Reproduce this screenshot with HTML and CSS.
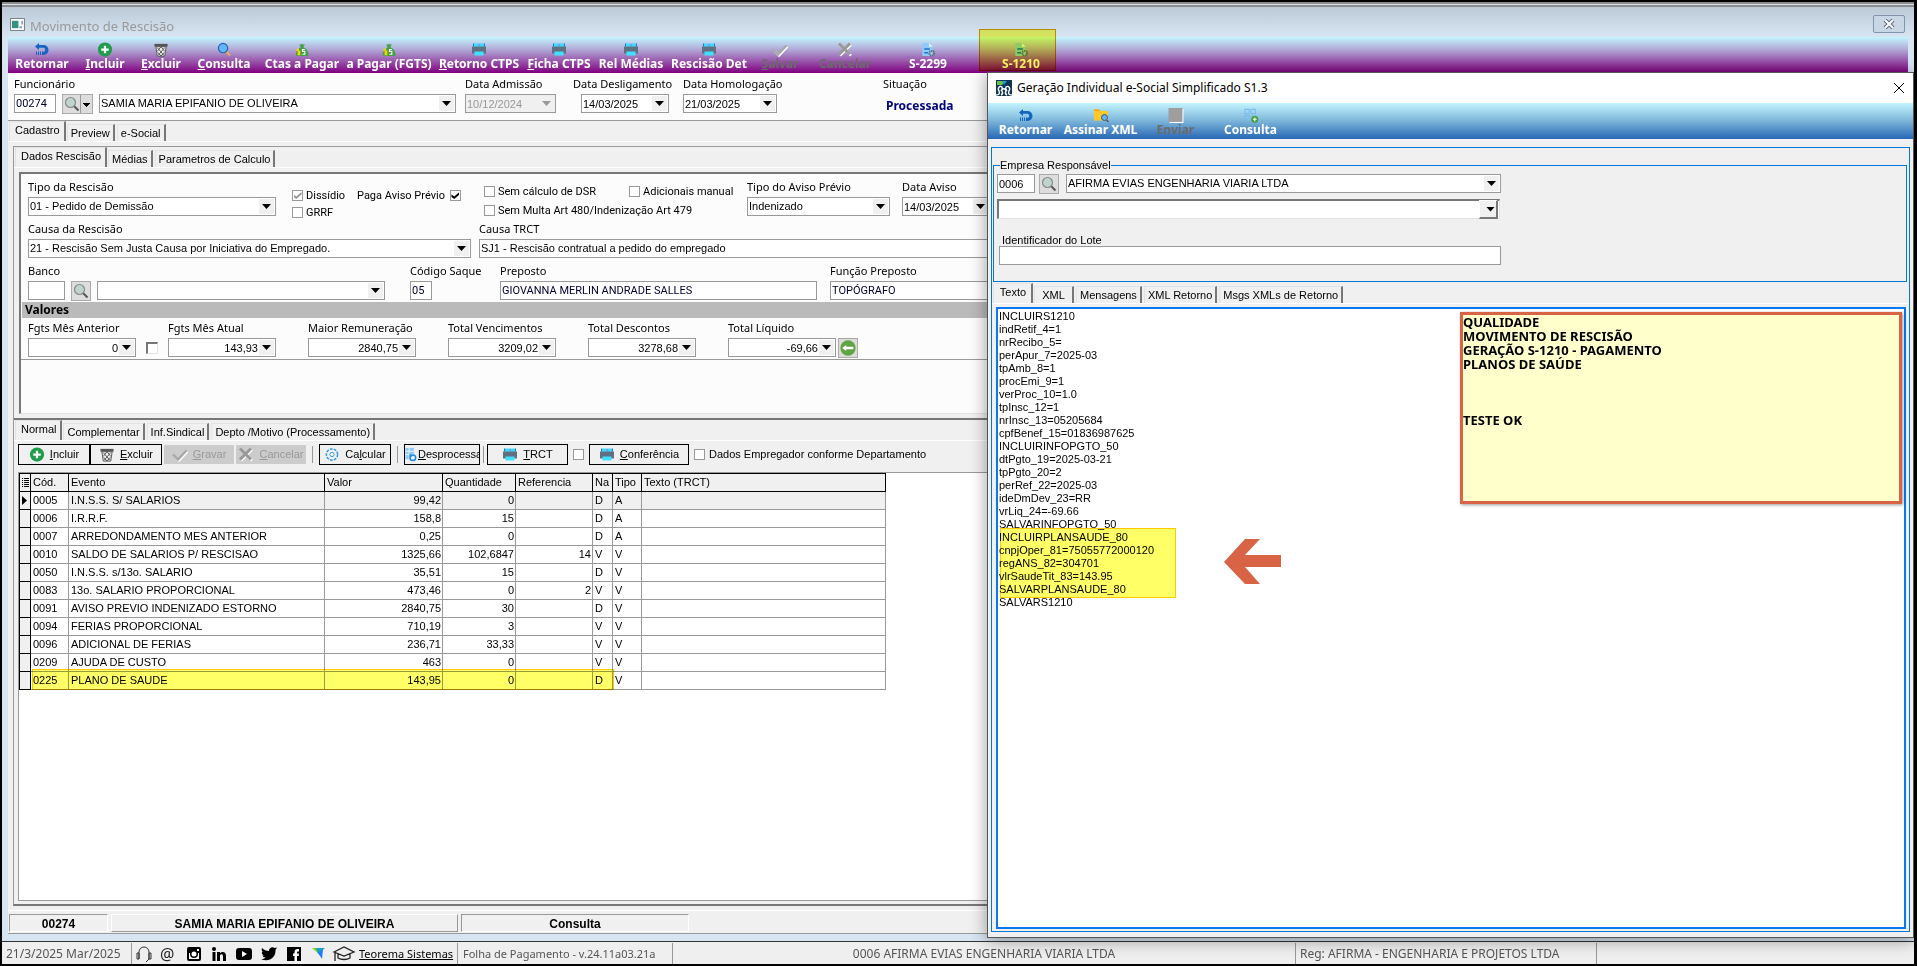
FILE: index.html
```html
<!DOCTYPE html>
<html lang="pt-BR">

<head>
  <meta charset="UTF-8">
  <title>Movimento de Rescisão</title>
  <link rel="stylesheet" href="styles.css">
</head>

<body>

  <svg class="sprite" aria-hidden="true">
    <symbol id="i-back" viewBox="0 0 16 14">
      <path d="M1 4 5 0.500v2h4.500a5 5 0 0 1 0 10H9v-3h.5a2.200 2.200 0 0 0 0-4.300H5v2.300z" fill="#1565c0"/>
      <path d="M2.500 9v3.500M4.500 9v3.500M6.500 9v3.500M8.500 9v3.500" stroke="#1565c0"/>
    </symbol>
    <symbol id="i-plus" viewBox="0 0 16 16">
      <circle cx="8" cy="8" r="7.600" fill="#1f9d4b"/>
      <path d="M8 4v8M4 8h8" stroke="#fff" stroke-width="2.400"/>
    </symbol>
    <symbol id="i-trash" viewBox="0 0 16 16">
      <path d="M1 2h14v3H1z" fill="#555"/>
      <path d="M2.500 5h11L12 15H4z" fill="#eee" stroke="#555"/>
      <path d="M4 6l7 8M12 6l-7 8M8 5l4 5M8 5l-4 5M8 15l3.500-4M8 15l-3.500-4" stroke="#555" fill="none"/>
    </symbol>
    <symbol id="i-find" viewBox="0 0 16 16">
      <path d="M10.500 10.500l4 4" stroke="#e8b04a" stroke-width="2.200"/>
      <circle cx="7" cy="6.500" r="5" fill="#64b5f6" stroke="#1e63b0" stroke-width="1.200"/>
    </symbol>
    <symbol id="i-lens" viewBox="0 0 16 16">
      <path d="M10 10l4.500 4.500" stroke="#555" stroke-width="2"/>
      <circle cx="6.500" cy="6.500" r="5" fill="#bfd3cf" stroke="#8a8a8a" stroke-width="1.200"/>
    </symbol>
    <symbol id="i-money" viewBox="0 0 16 16">
      <path d="M5 2l2 1 1-1.500 1 1.500 2-1-1.500 3.500C13 7 15 10 15 13.500c0 1-1 1.500-2 1.500H4c-2 0-3-1-2.500-3C2 9 4 7 6.500 5.500z" fill="#43a047"/>
      <path d="M11 8H8.500v2H11v3H8.500" stroke="#fff" fill="none" stroke-width="1.200"/>
      <path d="M2 9l2-1.500V14M5.500 9v5" stroke="#ffd600" stroke-width="1.400" fill="none"/>
    </symbol>
    <symbol id="i-print" viewBox="0 0 16 14">
      <path d="M3 1h10v4H3z" fill="#40d8fb"/>
      <path d="M2 1h1v3H2zM13 1h1v3h-1z" fill="#1976d2"/>
      <path d="M1 4h14v7H1z" fill="#607080"/>
      <path d="M3.500 9h9V13h-9z" fill="#40e0ff"/>
      <path d="M7.500 2h1.500v1H7.500z" fill="#b050e0"/>
    </symbol>
    <symbol id="i-check" viewBox="0 0 16 14">
      <path d="M2 8l5 5L15.500 4" stroke="#fff" stroke-width="2.500" fill="none"/>
      <path d="M1 7l5 5L14.500 3" stroke="#a8a8a8" stroke-width="2.500" fill="none"/>
    </symbol>
    <symbol id="i-cross" viewBox="0 0 16 14">
      <path d="M3 2l11 11M14 2L3 13" stroke="#fff" stroke-width="2.500"/>
      <path d="M2 1l11 11M13 1L2 12" stroke="#999" stroke-width="3"/>
    </symbol>
    <symbol id="i-doc" viewBox="0 0 16 16">
      <path d="M2 1h7l4 4v10H2z" fill="#90caf9"/>
      <path d="M9 1l4 4H9z" fill="#e3f2fd"/>
      <path d="M4 7.500h6M4 11.500h4" stroke="#1976d2" stroke-width="1.500"/>
      <circle cx="12" cy="12" r="2.600" fill="none" stroke="#546e7a" stroke-width="2" stroke-dasharray="1.500 .7"/>
    </symbol>
    <symbol id="i-folder" viewBox="0 0 16 14">
      <path d="M1 1h5l1.500 1.500H15V12H1z" fill="#ffca28"/>
      <path d="M1 1h5l1.500 1.500H1z" fill="#ffa000"/>
      <path d="M13.500 11.500l2 2" stroke="#555" stroke-width="1.500"/>
      <circle cx="11.500" cy="9" r="3" fill="#64b5f6" stroke="#37598a"/>
    </symbol>
    <symbol id="i-send" viewBox="0 0 14 14">
      <path d="M1 1h13v13H1z" fill="#fff"/>
      <path d="M0 0h13v13H0z" fill="#9e9e9e"/>
    </symbol>
    <symbol id="i-gridplus" viewBox="0 0 16 16">
      <path d="M1.500 1.500h4.500v4.500h-4.500zM8 1.500h4.500v4.500H8zM1.500 8h4.500v4.500h-4.500z" fill="none" stroke="#7dbcf0" stroke-width="1.200"/>
      <circle cx="12" cy="12" r="3.800" fill="#43a047"/>
      <path d="M12 10v4M10 12h4" stroke="#fff" stroke-width="1.200"/>
    </symbol>
    <symbol id="i-gear" viewBox="0 0 16 16">
      <circle cx="8" cy="8" r="6" fill="none" stroke="#2f9be0" stroke-width="1.600" stroke-dasharray="3 1.200"/>
      <circle cx="8" cy="8" r="2.300" fill="#fff" stroke="#2f9be0"/>
    </symbol>
    <symbol id="i-db" viewBox="0 0 12 16">
      <path d="M0 1h9v12H0z" fill="#90caf9"/>
      <path d="M0 4.500h9M0 8h9M4 1v12" stroke="#fff" stroke-width=".8"/>
      <circle cx="8" cy="11.500" r="3" fill="#e3f2fd" stroke="#1e88e5" stroke-width="1.600"/>
      <path d="M4 7l4 2-3 2.500z" fill="#1e88e5"/>
    </symbol>
    <symbol id="i-green" viewBox="0 0 18 18">
      <circle cx="9" cy="9" r="8.600" fill="#5fa544"/>
      <path d="M2.500 9L7 5.500v2h8v3H7v2z" fill="#fff"/>
    </symbol>
    <symbol id="i-brand" viewBox="0 0 14 14">
      <path d="M0 2h7v6z" fill="#7ed321"/>
      <path d="M4 2h9L6 8z" fill="#1ba1c8"/>
      <path d="M6 7l5-4-1 10z" fill="#2179ff"/>
    </symbol>
  </svg>

  <main class="window">
    <header class="titlebar">
      <svg class="app-icon" viewBox="0 0 16 14"><path d="M.5.500h15v13H.5z" fill="#fff" stroke="#6b7680"/><path d="M2 3h7v8H2z" fill="#39917f"/><path d="M10 9h3v2h-3zM12 3h2v4h-2z" fill="#8aa9c9"/></svg>
      <h1>Movimento de Rescisão</h1>
      <button class="mdi-close" aria-label="Fechar"><svg viewBox="0 0 12 10"><path d="M2 1l8 8M10 1L2 9" stroke="#5d6676" stroke-width="4"/><path d="M2 1l8 8M10 1L2 9" stroke="#fff" stroke-width="2"/></svg></button>
    </header>

    <nav class="toolbar main-tools">
      <button><svg><use href="#i-back"/></svg>Retornar</button>
      <button><svg><use href="#i-plus"/></svg><span><u>I</u>ncluir</span></button>
      <button><svg><use href="#i-trash"/></svg><span><u>E</u>xcluir</span></button>
      <button><svg><use href="#i-find"/></svg><span><u>C</u>onsulta</span></button>
      <button><svg><use href="#i-money"/></svg>Ctas a Pagar</button>
      <button><svg><use href="#i-money"/></svg>a Pagar (FGTS)</button>
      <button><svg><use href="#i-print"/></svg><span><u>R</u>etorno CTPS</span></button>
      <button><svg><use href="#i-print"/></svg><span><u>F</u>icha CTPS</span></button>
      <button><svg><use href="#i-print"/></svg>Rel Médias</button>
      <button><svg><use href="#i-print"/></svg>Rescisão Det</button>
      <button disabled><svg><use href="#i-check"/></svg><span><u>S</u>alvar</span></button>
      <button disabled><svg><use href="#i-cross"/></svg>Cancelar</button>
      <button><svg><use href="#i-doc"/></svg>S-2299</button>
      <button class="marked"><svg><use href="#i-doc"/></svg>S-1210</button>
    </nav>

    <div class="client">
      <section class="employee">
        <div class="field">
          <label for="func">Funcionário</label>
          <div class="controls">
            <input class="w-func tahoma" id="func" value="00274">
            <button class="lookup split" aria-label="Pesquisar"><svg><use href="#i-lens"/></svg><i></i></button>
            <span class="combo w-name"><select aria-label="Nome"><option>SAMIA MARIA EPIFANIO DE OLIVEIRA</option></select></span>
          </div>
        </div>
        <div class="field w-adm">
          <label for="adm">Data Admissão</label>
          <span class="combo off"><input id="adm" value="10/12/2024" disabled></span>
        </div>
        <div class="field w-desl">
          <label for="desl">Data Desligamento</label>
          <span class="combo"><input id="desl" value="14/03/2025"></span>
        </div>
        <div class="field w-hom">
          <label for="hom">Data Homologação</label>
          <span class="combo"><input id="hom" value="21/03/2025"></span>
        </div>
        <div class="field">
          <span class="label">Situação</span>
          <strong class="status">Processada</strong>
        </div>
      </section>

      <nav class="tabs">
        <button class="on">Cadastro</button>
        <button>Preview</button>
        <button>e-Social</button>
      </nav>

      <div class="page">
        <nav class="tabs">
          <button class="on">Dados Rescisão</button>
          <button>Médias</button>
          <button>Parametros de Calculo</button>
        </nav>

        <section class="panel">
          <div class="rows">
            <div class="row row-type">
              <div class="field w-type">
                <label for="tipo">Tipo da Rescisão</label>
                <span class="combo"><select id="tipo"><option>01 - Pedido de Demissão</option></select></span>
              </div>
              <div class="checks two">
                <label><input type="checkbox" checked disabled>Dissídio</label>
                <label><input type="checkbox">GRRF</label>
              </div>
              <div class="checks one">
                <label>Paga Aviso Prévio<input type="checkbox" checked></label>
              </div>
              <div class="checks three">
                <div class="pair">
                  <label><input type="checkbox">Sem cálculo de DSR</label>
                  <label><input type="checkbox">Adicionais manual</label>
                </div>
                <label><input type="checkbox">Sem Multa Art 480/Indenização Art 479</label>
              </div>
              <div class="field w-aviso">
                <label for="aviso">Tipo do Aviso Prévio</label>
                <span class="combo"><select id="aviso"><option>Indenizado</option></select></span>
              </div>
              <div class="field w-dtaviso">
                <label for="dtaviso">Data Aviso</label>
                <span class="combo"><input id="dtaviso" value="14/03/2025"></span>
              </div>
            </div>

            <div class="row row-cause">
              <div class="field w-cause">
                <label for="causa">Causa da Rescisão</label>
                <span class="combo"><select id="causa"><option>21 - Rescisão Sem Justa Causa por Iniciativa do Empregado.</option></select></span>
              </div>
              <div class="field w-trct">
                <label for="trct">Causa TRCT</label>
                <span class="combo"><select id="trct"><option>SJ1 - Rescisão contratual a pedido do empregado</option></select></span>
              </div>
            </div>

            <div class="row row-bank">
              <div class="field">
                <label for="banco">Banco</label>
                <div class="controls">
                  <input class="w-bank" id="banco">
                  <button class="lookup" aria-label="Pesquisar banco"><svg><use href="#i-lens"/></svg></button>
                  <span class="combo w-bankname"><select aria-label="Nome do banco"><option></option></select></span>
                </div>
              </div>
              <div class="field w-saque">
                <label for="saque">Código Saque</label>
                <input class="tahoma" id="saque" value="05">
              </div>
              <div class="field w-prep">
                <label for="prep">Preposto</label>
                <input class="tahoma" id="prep" value="GIOVANNA MERLIN ANDRADE SALLES">
              </div>
              <div class="field w-role">
                <label for="funcprep">Função Preposto</label>
                <input class="tahoma" id="funcprep" value="TOPÓGRAFO">
              </div>
            </div>
          </div>

          <h2>Valores</h2>

          <div class="values">
            <div class="field">
              <label for="v1">Fgts Mês Anterior</label>
              <div class="controls">
                <span class="combo num"><input id="v1" value="0"></span>
                <input class="sunken" type="checkbox" aria-label="Fgts mês anterior">
              </div>
            </div>
            <div class="field"><label for="v2">Fgts Mês Atual</label><span class="combo num"><input id="v2" value="143,93"></span></div>
            <div class="field"><label for="v3">Maior Remuneração</label><span class="combo num"><input id="v3" value="2840,75"></span></div>
            <div class="field"><label for="v4">Total Vencimentos</label><span class="combo num"><input id="v4" value="3209,02"></span></div>
            <div class="field"><label for="v5">Total Descontos</label><span class="combo num"><input id="v5" value="3278,68"></span></div>
            <div class="field">
              <label for="v6">Total Líquido</label>
              <div class="controls tight">
                <span class="combo num"><input id="v6" value="-69,66"></span>
                <button class="lookup" aria-label="Recalcular"><svg><use href="#i-green"/></svg></button>
              </div>
            </div>
          </div>
        </section>

        <section class="events">
          <nav class="tabs">
            <button class="on">Normal</button>
            <button>Complementar</button>
            <button>Inf.Sindical</button>
            <button>Depto /Motivo (Processamento)</button>
          </nav>

          <div class="actions">
            <button class="w72"><svg><use href="#i-plus"/></svg><span><u>I</u>ncluir</span></button>
            <button class="w72"><svg><use href="#i-trash"/></svg><span><u>E</u>xcluir</span></button>
            <button class="w70" disabled><svg><use href="#i-check"/></svg><span><u>G</u>ravar</span></button>
            <button class="w70" disabled><svg><use href="#i-cross"/></svg><span><u>C</u>ancelar</span></button>
            <i class="sep wide"></i>
            <button class="w72"><svg><use href="#i-gear"/></svg><span>Ca<u>l</u>cular</span></button>
            <i class="sep wide"></i>
            <button class="w76"><svg><use href="#i-db"/></svg><span><u>D</u>esprocessa</span></button>
            <i class="sep"></i>
            <button class="w80"><svg><use href="#i-print"/></svg><span><u>T</u>RCT</span></button>
            <input type="checkbox" aria-label="TRCT">
            <button class="w100"><svg><use href="#i-print"/></svg><span><u>C</u>onferência</span></button>
            <label><input type="checkbox">Dados Empregador conforme Departamento</label>
          </div>

          <div class="grid">
            <table>
              <colgroup>
                <col class="c-mark"><col class="c-cod"><col class="c-evt"><col class="c-val"><col class="c-qtd"><col class="c-ref"><col class="c-na"><col class="c-tipo"><col class="c-txt">
              </colgroup>
              <thead>
                <tr><th><i class="list"></i></th><th>Cód.</th><th>Evento</th><th>Valor</th><th>Quantidade</th><th>Referencia</th><th>Na</th><th>Tipo</th><th>Texto (TRCT)</th></tr>
              </thead>
              <tbody>
                <tr class="current"><td><i></i></td><td>0005</td><td>I.N.S.S. S/ SALARIOS</td><td>99,42</td><td>0</td><td></td><td>D</td><td>A</td><td></td></tr>
                <tr><td></td><td>0006</td><td>I.R.R.F.</td><td>158,8</td><td>15</td><td></td><td>D</td><td>A</td><td></td></tr>
                <tr><td></td><td>0007</td><td>ARREDONDAMENTO MES ANTERIOR</td><td>0,25</td><td>0</td><td></td><td>D</td><td>A</td><td></td></tr>
                <tr><td></td><td>0010</td><td>SALDO DE SALARIOS P/ RESCISAO</td><td>1325,66</td><td>102,6847</td><td>14</td><td>V</td><td>V</td><td></td></tr>
                <tr><td></td><td>0050</td><td>I.N.S.S. s/13o. SALARIO</td><td>35,51</td><td>15</td><td></td><td>D</td><td>V</td><td></td></tr>
                <tr><td></td><td>0083</td><td>13o. SALARIO PROPORCIONAL</td><td>473,46</td><td>0</td><td>2</td><td>V</td><td>V</td><td></td></tr>
                <tr><td></td><td>0091</td><td>AVISO PREVIO INDENIZADO ESTORNO</td><td>2840,75</td><td>30</td><td></td><td>D</td><td>V</td><td></td></tr>
                <tr><td></td><td>0094</td><td>FERIAS PROPORCIONAL</td><td>710,19</td><td>3</td><td></td><td>V</td><td>V</td><td></td></tr>
                <tr><td></td><td>0096</td><td>ADICIONAL DE FERIAS</td><td>236,71</td><td>33,33</td><td></td><td>V</td><td>V</td><td></td></tr>
                <tr><td></td><td>0209</td><td>AJUDA DE CUSTO</td><td>463</td><td>0</td><td></td><td>V</td><td>V</td><td></td></tr>
                <tr><td></td><td>0225</td><td>PLANO DE SAUDE</td><td>143,95</td><td>0</td><td></td><td>D</td><td>V</td><td></td></tr>
              </tbody>
            </table>
            <div class="marker row-marker"></div>
          </div>
        </section>
      </div>

      <footer class="childbar">
        <span class="cb-code">00274</span>
        <span class="cb-name">SAMIA MARIA EPIFANIO DE OLIVEIRA</span>
        <span class="cb-mode">Consulta</span>
      </footer>
    </div>
  </main>

  <footer class="appbar">
    <span class="ab-date">21/3/2025 Mar/2025</span>
    <div class="ab-links">
      <a href="#" aria-label="Suporte"><svg viewBox="0 0 18 18"><path d="M4 14V7a5 5 0 0 1 10 0v7M2 8v6h2V8zM14 8v6h2V8zM14 14l-3 3" fill="none" stroke="#333"/></svg></a>
      <a href="#" class="at">@</a>
      <a href="#" aria-label="Instagram"><svg viewBox="0 0 18 18"><rect x="2" y="2" width="14" height="14" rx="2"/><path d="M4 8h10v6H4z" fill="#fff"/><circle cx="9" cy="9" r="4"/><circle cx="9" cy="9" r="2.500" fill="#fff"/><path d="M12 4h2v2h-2z" fill="#fff"/></svg></a>
      <a href="#" aria-label="LinkedIn"><svg viewBox="0 0 18 18"><circle cx="4" cy="4" r="2"/><path d="M2.500 7h3v9h-3zM7 7h3v1.300C11 6.300 16 6 16 10.500V16h-3v-5c0-2.500-3-2.500-3 0v5H7z"/></svg></a>
      <a href="#" aria-label="YouTube"><svg viewBox="0 0 18 18"><rect x="1" y="3" width="16" height="12" rx="3"/><path d="M7 6l5 3-5 3z" fill="#fff"/></svg></a>
      <a href="#" aria-label="Twitter"><svg viewBox="0 0 18 18"><path d="M2 3c2 2 4 3 7 3 0-4 4-4.500 5.500-3L17 2.500 15.500 5C16 12 9 18 1 14c2 0 3.500-.5 4.500-1.500-2 0-2.500-1-3-2H4C2 9.500 1.500 8 2 7l1 .3C1.500 6 1.500 4.500 2 3z"/></svg></a>
      <a href="#" aria-label="Facebook"><svg viewBox="0 0 18 18"><path d="M2 2h14v14H2z"/><path d="M9.500 16V11H8V8.500h1.500V7c0-2 1.200-3 3-3H14v2.500h-1.200c-.6 0-.8.3-.8.9v1.100h2L13.700 11H12v5z" fill="#fff"/></svg></a>
      <a href="#" aria-label="Teorema"><svg viewBox="0 0 18 18"><use href="#i-brand" x="2" y="1" width="14" height="14"/></svg></a>
      <a href="#" class="cap" aria-label="Treinamento"><svg viewBox="0 0 24 18"><path d="M2 7l10-5 10 5-10 4zM6 9v4c3 2 9 2 12 0V9M3 8v8" fill="none" stroke="#222" stroke-width="1.300"/></svg></a>
      <a href="#" class="site">Teorema Sistemas</a>
    </div>
    <span class="ab-version">Folha de Pagamento - v.24.11a03.21a</span>
    <span class="ab-company">0006 AFIRMA EVIAS ENGENHARIA VIARIA LTDA</span>
    <span class="ab-reg">Reg: AFIRMA - ENGENHARIA E PROJETOS LTDA</span>
    <span class="ab-rest"></span>
  </footer>

  <section class="dialog" role="dialog" aria-labelledby="dlg-title">
    <header>
      <svg class="dlg-icon" viewBox="0 0 16 16"><path d="M0 0h16v16H0z" fill="#0c3350"/><path d="M1 1h8L6 5H1z" fill="#6cc04a"/><path d="M6 1h5L8 5z" fill="#1b9bd0"/><path d="M0 15c3 0 4-1 3-4-2-3 1-6 3-4 1 2 0 3-1 4M11 11c-1-1-2-2-1-4 2-2 5 1 3 4-1 3 0 4 3 4M5 15c2-1 2-2 1-4-1-3 4-3 4 0-1 2-1 3 1 4" fill="none" stroke="#fff" stroke-width="1.400"/></svg>
      <h2 id="dlg-title">Geração Individual e-Social Simplificado S1.3</h2>
      <button aria-label="Fechar"><svg viewBox="0 0 10 10"><path d="M0 0l10 10M10 0L0 10" stroke="#000"/></svg></button>
    </header>

    <nav class="toolbar dlg-tools">
      <button><svg><use href="#i-back"/></svg>Retornar</button>
      <button><svg><use href="#i-folder"/></svg>Assinar XML</button>
      <button disabled><svg><use href="#i-send"/></svg>Enviar</button>
      <button><svg><use href="#i-gridplus"/></svg>Consulta</button>
    </nav>

    <div class="dlg-body">
      <fieldset>
        <legend>Empresa Responsável</legend>
        <div class="controls">
          <input class="w-emp" aria-label="Empresa" value="0006">
          <button class="lookup" aria-label="Pesquisar empresa"><svg><use href="#i-lens"/></svg></button>
          <span class="combo w-empname"><select aria-label="Nome da empresa"><option>AFIRMA EVIAS ENGENHARIA VIARIA LTDA</option></select></span>
        </div>
        <span class="combo classic"><select aria-label="Seleção"><option></option></select></span>
        <label for="lote">Identificador do Lote</label>
        <input class="w-lote" id="lote">
      </fieldset>

      <nav class="tabs">
        <button class="on">Texto</button>
        <button>XML</button>
        <button>Mensagens</button>
        <button>XML Retorno</button>
        <button>Msgs XMLs de Retorno</button>
      </nav>

      <div class="memo">
        <textarea aria-label="Texto">INCLUIRS1210
indRetif_4=1
nrRecibo_5=
perApur_7=2025-03
tpAmb_8=1
procEmi_9=1
verProc_10=1.0
tpInsc_12=1
nrInsc_13=05205684
cpfBenef_15=01836987625
INCLUIRINFOPGTO_50
dtPgto_19=2025-03-21
tpPgto_20=2
perRef_22=2025-03
ideDmDev_23=RR
vrLiq_24=-69.66
SALVARINFOPGTO_50
INCLUIRPLANSAUDE_80
cnpjOper_81=75055772000120
regANS_82=304701
vlrSaudeTit_83=143.95
SALVARPLANSAUDE_80
SALVARS1210</textarea>
        <div class="marker text-marker"></div>
        <svg class="arrow" viewBox="0 0 57 45"><path d="M0 23L21 0h15L21 16h36v12H21l15 17H21z" fill="#d96345"/></svg>
        <aside class="note">QUALIDADE<br>MOVIMENTO DE RESCISÃO<br>GERAÇÃO S-1210 - PAGAMENTO<br>PLANOS DE SAÚDE<br><br><br><br>TESTE OK</aside>
      </div>
    </div>
  </section>

</body>
</html>
```
FILE: styles.css
```css
* {
  box-sizing: border-box;
}
body {
  margin: 0;
  height: 100vh;
  padding: 2px;
  display: flex;
  flex-direction: column;
  position: relative;
  overflow: hidden;
  background: #000;
  color: #000;
  font: 11px/13px "Liberation Sans", Arial, sans-serif;
}
button, input, select, textarea {
  font: inherit;
  color: inherit;
  margin: 0;
  border-radius: 0;
}
button {
  padding: 0;
  white-space: nowrap;
}
h1, h2 {
  margin: 0;
}
.sprite {
  position: absolute;
  width: 0;
  height: 0;
}

/* main window */
.window {
  flex: 1;
  min-height: 0;
  display: flex;
  flex-direction: column;
  padding: 0 6px 7px;
  margin-right: 1px;
  background: #d7e4f2;
  border-top: 5px double #8c8c8c;
}
.titlebar {
  display: flex;
  align-items: center;
  gap: 5px;
  height: 30px;
  margin: 0 -6px;
  padding: 8px 9px 0 8px;
  background: linear-gradient(#bccad8, #d7e4f2);
}
.titlebar h1 {
  flex: 1;
  font: 13px/18px "Noto Sans", sans-serif;
  color: #999;
}
.app-icon {
  width: 15px;
  height: 13px;
  margin-bottom: 3px;
}
.mdi-close {
  width: 32px;
  height: 18px;
  margin-bottom: 4px;
  border: 1px solid #8492ab;
  border-radius: 2px;
  background: #c9d6e6;
}
.mdi-close svg {
  width: 12px;
  height: 10px;
  display: block;
  margin: auto;
}
.toolbar {
  display: grid;
  height: 36px;
  flex: none;
}
.toolbar button {
  display: flex;
  flex-direction: column;
  align-items: center;
  padding-top: 5px;
  border: 0;
  background: none;
  color: #fff;
  font: bold 12px/14px "Noto Sans", sans-serif;
}
.toolbar svg {
  width: 16px;
  height: 15px;
}
.toolbar button:disabled {
  color: #6b6b6b;
}
.main-tools {
  grid-template-columns: 68px 58px 54px 72px 84px 90px 90px 70px 74px 82px 60px 70px 96px 90px;
  background: linear-gradient(#c3f5ff, #b4b4dc 30%, #800080);
}
.dlg-tools {
  grid-template-columns: repeat(4, 75px);
  background: linear-gradient(#c3f5ff, #84bcdd 45%, #2767b5);
}
.marked {
  position: relative;
}
.marked::after {
  content: "";
  position: absolute;
  inset: -8px 10px 2px 3px;
  border: 1px solid #dca000;
  background: #ffff66;
  mix-blend-mode: multiply;
}
.client {
  flex: 1;
  min-height: 0;
  display: flex;
  flex-direction: column;
  background: #f0f0f0;
  border-bottom: 1px solid #999;
}

/* fields */
.employee {
  display: grid;
  grid-template-columns: 451px 108px 110px 200px 1fr;
  padding: 1px 6px 7px;
  background: #fcfcfc;
  border-bottom: 1px solid #999;
}
.field {
  display: flex;
  flex-direction: column;
  min-width: 0;
}
.field > label, .field > .label {
  font: 11px/20px "Noto Sans", sans-serif;
  white-space: nowrap;
}
.controls {
  display: flex;
  align-items: center;
  height: 19px;
}
input, select {
  height: 19px;
  width: 100%;
  min-width: 0;
  padding: 0 1px;
  border: 1px solid #999;
  background: #fff;
  appearance: none;
}
.tahoma {
  font-family: Roboto, sans-serif;
  color: #000030;
}
.combo {
  display: grid;
}
.combo > input, .combo > select, .combo::before, .combo::after {
  grid-area: 1 / 1;
}
.combo::before, .combo::after {
  content: "";
  justify-self: end;
  align-self: center;
  z-index: 1;
  pointer-events: none;
}
.combo::before {
  width: 15px;
  height: 15px;
  margin-right: 2px;
  background: #f0f0f0;
}
.combo::after {
  width: 9px;
  height: 5px;
  margin-right: 5px;
  background: #000;
  clip-path: polygon(0 0, 100% 0, 50% 100%);
}
.off input {
  background: #f0f0f0;
  color: #999;
}
.off::after {
  background: #999;
}
.num {
  width: 108px;
}
.num input {
  padding-right: 17px;
  text-align: right;
}
.lookup {
  display: flex;
  align-items: center;
  justify-content: center;
  flex: none;
  width: 20px;
  height: 20px;
  border: 1px solid #aaa;
  background: #ddd;
}
.lookup svg {
  width: 16px;
  height: 16px;
}
.split {
  width: 31px;
}
.split i {
  width: 12px;
  height: 18px;
  border-left: 1px solid #999;
  background: linear-gradient(#000, #000) 50% 8px / 7px 1px no-repeat, linear-gradient(#000, #000) 50% 9px / 5px 1px no-repeat, linear-gradient(#000, #000) 50% 10px / 3px 1px no-repeat, linear-gradient(#000, #000) 50% 11px / 1px 1px no-repeat;
}
.employee .controls {
  gap: 6px;
}
.w-func { width: 42px; }
.w-name { width: 357px; }
.w-adm { width: 91px; }
.w-hom { width: 94px; }
.w-desl .combo { width: 88px; margin-left: 8px; }
.w-type { width: 248px; }
.w-aviso { width: 143px; }
.w-dtaviso { width: 88px; }
.w-cause { width: 443px; }
.w-trct { width: 530px; }
.w-role { width: 179px; }
.w-bank { width: 37px; }
.w-bankname { width: 288px; }
.w-saque input { width: 22px; }
.w-prep { width: 317px; }
.w-emp { width: 38px; }
.w-empname { width: 435px; margin-left: 3px; }
.w-lote { width: 502px; }
.status {
  padding-left: 3px;
  font: bold 12px/19px "Noto Sans", sans-serif;
  padding-top: 2px;
  height: 19px;
  color: #000080;
}

/* check boxes */
input[type="checkbox"] {
  flex: none;
  display: grid;
  place-items: center;
  width: 11px;
  height: 11px;
  padding: 0;
}
input[type="checkbox"]:checked::after {
  content: "";
  width: 8px;
  height: 7px;
  background: #000;
  clip-path: polygon(0 35%, 35% 65%, 100% 0, 100% 35%, 35% 100%, 0 70%);
}
input[type="checkbox"]:disabled::after {
  background: #999;
}
input.sunken {
  width: 12px;
  height: 12px;
  border: 1px solid #e3e3e3;
  border-top: 2px solid #777;
  border-left: 2px solid #777;
}
.checks {
  display: flex;
  flex-direction: column;
  font-family: Roboto, sans-serif;
  white-space: nowrap;
}
.checks label {
  display: flex;
  align-items: center;
  gap: 3px;
}
.two {
  gap: 4px;
  padding-top: 12px;
}
.one {
  padding-top: 12px;
}
.one label {
  gap: 5px;
}
.three {
  gap: 6px;
  padding-top: 8px;
}
.pair {
  display: grid;
  grid-template-columns: 145px 1fr;
}

/* tabs and pages */
.tabs {
  display: flex;
  align-items: flex-end;
  gap: 2px;
  height: 21px;
  flex: none;
  padding-left: 1px;
  border-bottom: 1px solid #fff;
}
.tabs button {
  height: 17px;
  min-width: 40px;
  padding: 0 3px;
  border: 1px solid #e3e3e3;
  border-right: 2px solid #777;
  border-bottom: 0;
  background: #f0f0f0;
}
.tabs .on {
  height: 20px;
  padding: 0 4px 3px 5px;
  margin-right: -1px;
}
.page {
  flex: 1;
  min-height: 0;
  display: flex;
  flex-direction: column;
  margin: 4px 0 4px 5px;
  border: 1px solid #999;
  border-right: 0;
  border-bottom: 2px solid #777;
}
.panel {
  flex: none;
  height: 242px;
  margin: 4px 0 4px 5px;
  border: 2px solid #777;
  border-right: 0;
  border-bottom: 1px solid #e3e3e3;
  background: #fcfcfc;
}
.rows {
  display: flex;
  flex-direction: column;
  gap: 3px;
  padding: 3px 0 2px 7px;
}
.row {
  display: grid;
  height: 39px;
}
.row-type {
  grid-template-columns: 264px 65px 127px 263px 155px 1fr;
}
.row-cause {
  grid-template-columns: 451px 1fr;
}
.row-bank {
  grid-template-columns: 382px 90px 330px 1fr;
}
.row-bank .controls {
  gap: 6px;
}
.panel h2 {
  height: 16px;
  margin-left: 1px;
  padding-left: 3px;
  background: #bababa;
  font: bold 12px/16px "Noto Sans", sans-serif;
}
.values {
  display: grid;
  grid-template-columns: repeat(6, 140px);
  padding: 0 0 2px 7px;
  border-bottom: 1px solid #999;
}
.values .controls {
  gap: 10px;
}
.values .tight {
  gap: 2px;
}
.events {
  flex: 1;
  min-height: 0;
  display: flex;
  flex-direction: column;
  border-top: 2px solid #777;
}
.actions {
  display: flex;
  align-items: center;
  height: 21px;
  margin: 3px 0 7px 4px;
}
.actions button {
  display: flex;
  align-items: center;
  justify-content: center;
  gap: 5px;
  height: 21px;
  border: 1px solid #000;
  background: #f0f0f0;
  overflow: hidden;
}
.actions button:disabled {
  height: 19px;
  margin-left: 2px;
  border: 0;
  background: #ccc;
  color: #999;
}
.actions svg {
  flex: none;
  width: 16px;
  height: 15px;
}
.actions input {
  margin: 0 5px;
}
.actions label {
  display: flex;
  align-items: center;
}
.actions label input {
  margin-right: 4px;
}
.sep {
  width: 1px;
  height: 17px;
  margin: 0 3px;
  background: #999;
}
.wide {
  margin: 0 6px;
}
.w70 { width: 70px; }
.w72 { width: 72px; }
.w80 { width: 81px; }
.w100 { width: 100px; }
.actions .w76 {
  width: 76px;
  justify-content: flex-start;
  gap: 1px;
}
.actions .w76 svg {
  width: 12px;
}

/* events table */
.grid {
  flex: 1;
  min-height: 0;
  position: relative;
  margin: 0 0 3px 4px;
  background: #fff;
  border: 1px solid #999;
  border-right: 0;
}
table {
  width: 867px;
  table-layout: fixed;
  border-collapse: collapse;
}
.c-mark { width: 11px; }
.c-cod { width: 38px; }
.c-evt { width: 256px; }
.c-val { width: 118px; }
.c-qtd { width: 73px; }
.c-ref { width: 77px; }
.c-na { width: 20px; }
.c-tipo { width: 29px; }
.c-txt { width: 244px; }
th, td {
  height: 18px;
  padding: 0 2px;
  border: 1px solid #999;
  font-weight: normal;
  line-height: 13px;
  text-align: left;
  white-space: nowrap;
  overflow: hidden;
}
th, td:first-child {
  border-color: #000;
  background: #f0f0f0;
}
.list {
  display: block;
  width: 7px;
  height: 9px;
  background: repeating-linear-gradient(#000 0 1px, transparent 1px 2px);
  clip-path: polygon(0 0, 15% 0, 15% 100%, 30% 100%, 30% 0, 100% 0, 100% 100%, 0 100%);
}
td:nth-child(4), td:nth-child(5), td:nth-child(6) {
  padding-right: 1px;
  text-align: right;
}
.current td:nth-child(n+3) {
  background: #f0f0f0;
}
.current i {
  display: block;
  width: 5px;
  height: 9px;
  background: #000;
  clip-path: polygon(0 0, 100% 50%, 0 100%);
}
.marker {
  position: absolute;
  background: #ffff66;
  border: 1px solid #ffcc00;
  mix-blend-mode: multiply;
  pointer-events: none;
}
.row-marker {
  left: 13px;
  top: 196px;
  width: 582px;
  height: 21px;
}

/* status bars */
.childbar {
  display: flex;
  gap: 3px;
  flex: none;
  height: 23px;
  padding: 3px 1px 1px;
  border-top: 1px solid #fff;
  font-weight: bold;
  font-size: 12px;
  line-height: 18px;
  text-align: center;
}
.childbar span {
  border: 1px solid #999;
  border-right-color: #fff;
  border-bottom-color: #fff;
}
.childbar .cb-name {
  width: 347px;
  border-color: #fff #999 #999 #fff;
}
.cb-code { width: 99px; }
.cb-mode { width: 228px; }
.appbar {
  display: flex;
  flex: none;
  height: 23px;
  margin-right: 1px;
  padding-top: 1px;
  border-top: 1px solid #333;
  background: #efefef;
  color: #555;
  font: 12px/22px "Noto Sans", sans-serif;
  white-space: nowrap;
}
.appbar > span, .ab-links {
  border-right: 1px solid #999;
}
.ab-date {
  width: 130px;
  padding-left: 4px;
}
.ab-links {
  display: flex;
  align-items: center;
  gap: 7px;
  width: 326px;
  padding-left: 3px;
}
.ab-links a {
  color: #222;
}
.ab-links svg {
  display: block;
  width: 18px;
  height: 18px;
}
.ab-links .cap {
  margin: 0 -4px 0 -3px;
}
.ab-links .cap svg {
  width: 24px;
}
.ab-links .at {
  width: 18px;
  font-size: 16px;
  text-decoration: none;
}
.ab-links .site {
  font-size: 11px;
  color: #000;
}
.ab-version {
  width: 215px;
  padding-left: 5px;
  font-size: 11px;
}
.ab-company {
  flex: 1;
  text-align: center;
}
.ab-reg {
  width: 301px;
  padding-left: 4px;
}
.appbar .ab-rest {
  width: 317px;
  border: 0;
}

/* S-1210 dialog */
.dialog {
  position: absolute;
  z-index: 2;
  left: 987px;
  right: 3px;
  top: 72px;
  bottom: 28px;
  display: flex;
  flex-direction: column;
  border: 1px solid #555;
  background: #f0f0f0;
  box-shadow: 0 2px 16px rgba(0, 0, 0, 0.4);
}
.dialog header {
  display: flex;
  align-items: center;
  gap: 5px;
  flex: none;
  height: 30px;
  padding: 0 9px 0 8px;
  background: #fff;
}
.dialog h2 {
  flex: 1;
  font: 12px/20px "Noto Sans", sans-serif;
}
.dlg-icon {
  width: 16px;
  height: 16px;
}
.dialog header button {
  border: 0;
  background: none;
}
.dialog header button svg {
  display: block;
  width: 10px;
  height: 10px;
}
.dlg-body {
  flex: 1;
  min-height: 0;
  display: flex;
  flex-direction: column;
  margin: 8px 3px 5px;
  padding: 11px 1px 2px;
  border: 1px solid #0078d7;
}
fieldset {
  flex: none;
  height: 123px;
  margin: 0 1px 0 0;
  padding: 2px 3px 0;
  border: 1px solid #0078d7;
}
legend {
  padding: 0;
  margin-left: 3px;
}
fieldset .controls {
  gap: 4px;
}
fieldset label {
  display: block;
  padding: 15px 0 0 5px;
  line-height: 12px;
}
.w-lote {
  display: block;
  margin-left: 2px;
}
.classic {
  width: 503px;
  margin-top: 6px;
}
.classic select {
  height: 20px;
  border: 1px solid #e3e3e3;
  border-top: 2px solid #777;
  border-left: 2px solid #777;
}
.classic::before {
  width: 16px;
  height: 16px;
  border: 1px solid #fff;
  border-right: 2px solid #777;
  border-bottom: 2px solid #777;
}
.dlg-body .tabs {
  margin: 1px 0 3px;
  padding-left: 0;
}
.memo {
  flex: 1;
  min-height: 0;
  display: flex;
  position: relative;
  margin: 0 2px 0 3px;
}
.memo textarea {
  flex: 1;
  padding: 1px;
  border: 2px solid #0a78f0;
  background: #fff;
  line-height: 13px;
  resize: none;
  outline: 0;
}
.text-marker {
  left: 4px;
  top: 221px;
  width: 176px;
  height: 70px;
}
.arrow {
  position: absolute;
  left: 228px;
  top: 232px;
  width: 57px;
  height: 45px;
}
.note {
  position: absolute;
  right: 4px;
  top: 5px;
  width: 442px;
  height: 192px;
  border: 3px solid #d96345;
  background: #ffffcc;
  box-shadow: 1px 1px 3px rgba(0, 0, 0, 0.4);
  font: bold 13px/14px "Noto Sans", sans-serif;
}
```
